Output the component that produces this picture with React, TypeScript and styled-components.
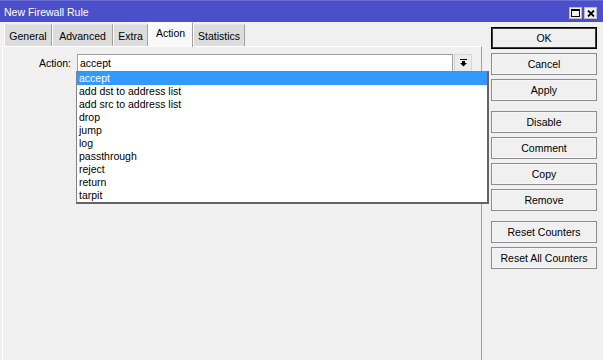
import styled, { createGlobalStyle } from "styled-components";

const GlobalStyle = createGlobalStyle`
  html, body {
    margin: 0;
    padding: 0;
    background: #f0f0f0;
  }
  body {
    font-family: "Liberation Sans", Arial, sans-serif;
    font-size: 10.5px;
    color: #000;
  }
`;

const Window = styled.div`
  width: 603px;
  height: 360px;
  display: flex;
  flex-direction: column;
  background: #f0f0f0;
  overflow: hidden;
`;

const TitleBar = styled.div`
  height: 22px;
  flex: none;
  display: flex;
  align-items: center;
  justify-content: space-between;
  padding: 0 6px 0 4px;
  box-sizing: border-box;
  background: #4b4fc9;
  border-top: 1px solid #6a6ed6;
  color: #fff;
  font-size: 10.5px;
`;

const TitleButtons = styled.div`
  display: flex;
  gap: 2px;
  margin-top: 3px;
`;

const TitleButton = styled.div`
  width: 13px;
  height: 12px;
  display: flex;
  align-items: center;
  justify-content: center;
  background: #f0f0f0;
  box-sizing: border-box;
  border: 1px solid #bdbdbd;
`;

const Body = styled.div`
  flex: 1;
  display: flex;
  min-height: 0;
`;

const Main = styled.div`
  width: 482px;
  flex: none;
  display: flex;
  flex-direction: column;
  padding-left: 2px;
  box-sizing: border-box;
  position: relative;
  z-index: 2;
`;

const TabStrip = styled.div`
  height: 24px;
  flex: none;
  display: flex;
  align-items: flex-end;
  padding-left: 2px;
`;

const Tab = styled.div<{ $active?: boolean; $w: number }>`
  width: ${(p) => p.$w}px;
  height: ${(p) => (p.$active ? 25 : 22)}px;
  margin-bottom: ${(p) => (p.$active ? -1 : 0)}px;
  box-sizing: border-box;
  display: flex;
  align-items: ${(p) => (p.$active ? "flex-start" : "center")};
  justify-content: center;
  padding-top: ${(p) => (p.$active ? 4 : 1)}px;
  background: ${(p) => (p.$active ? "#f9f9f9" : "#dcdcdc")};
  border-top: 1px solid ${(p) => (p.$active ? "#ffffff" : "#e6e6e6")};
  border-left: 1px solid #ffffff;
  border-right: 1px solid #a0a0a0;
  position: relative;
  z-index: ${(p) => (p.$active ? 1 : 0)};
`;

const Panel = styled.div`
  flex: 1;
  border-top: 1px solid #ffffff;
  border-left: 1px solid #ffffff;
  border-right: 1px solid #a0a0a0;
  padding-top: 7px;
  box-sizing: border-box;
`;

const FieldRow = styled.div`
  display: flex;
  align-items: center;
`;

const Label = styled.div`
  width: 68px;
  text-align: right;
  margin-right: 6px;
`;

const InputWrap = styled.div`
  position: relative;
  display: flex;
  gap: 1px;
`;

const Input = styled.div`
  width: 376px;
  height: 18px;
  box-sizing: border-box;
  background: #fff;
  border: 1px solid #a0a0a0;
  padding: 0 2px;
  line-height: 16px;
`;

const DropButton = styled.div`
  width: 18px;
  height: 18px;
  box-sizing: border-box;
  display: flex;
  align-items: center;
  justify-content: center;
  background: #ececec;
  border: 1px solid #d6d6d6;
`;

const DropList = styled.div`
  position: absolute;
  top: 17px;
  left: -1px;
  width: 413px;
  box-sizing: border-box;
  background: #fff;
  border-left: 1px solid #828282;
  border-top: 1px solid #828282;
  border-right: 2px solid #646464;
  border-bottom: 2px solid #646464;
  z-index: 5;
`;

const Item = styled.div<{ $selected?: boolean }>`
  height: 13px;
  line-height: 13px;
  padding-left: 2px;
  background: ${(p) => (p.$selected ? "#3399ff" : "transparent")};
  color: ${(p) => (p.$selected ? "#fff" : "#000")};
  white-space: nowrap;
`;

const Side = styled.div`
  flex: 1;
  display: flex;
  flex-direction: column;
  padding: 5px 6px 0 9px;
  gap: 4px;
`;

const Button = styled.div<{ $default?: boolean; $gap?: boolean }>`
  width: 106px;
  height: 22px;
  box-sizing: border-box;
  display: flex;
  align-items: center;
  justify-content: center;
  background: #f0f0f0;
  border: 1px solid ${(p) => (p.$default ? "#000" : "#8c8c8c")};
  box-shadow: inset 0 0 0 1px ${(p) => (p.$default ? "#3c3c3c" : "#f7f7f7")};
  margin-top: ${(p) => (p.$gap ? 6 : 0)}px;
`;

const tabs = [
  { name: "General", w: 48 },
  { name: "Advanced", w: 61 },
  { name: "Extra", w: 35 },
  { name: "Action", w: 45 },
  { name: "Statistics", w: 52 },
];

const actions = [
  "accept",
  "add dst to address list",
  "add src to address list",
  "drop",
  "jump",
  "log",
  "passthrough",
  "reject",
  "return",
  "tarpit",
];

const buttons = [
  { label: "OK", def: true },
  { label: "Cancel" },
  { label: "Apply" },
  { label: "Disable", gap: true },
  { label: "Comment" },
  { label: "Copy" },
  { label: "Remove" },
  { label: "Reset Counters", gap: true },
  { label: "Reset All Counters" },
];

function App() {
  return (
    <>
      <GlobalStyle />
      <Window>
        <TitleBar>
          <span>New Firewall Rule</span>
          <TitleButtons>
            <TitleButton>
              <svg width="9" height="8" viewBox="0 0 9 8">
                <rect x="0.5" y="0.5" width="8" height="7" fill="none" stroke="#000" />
                <rect x="0" y="0" width="9" height="2" fill="#000" />
              </svg>
            </TitleButton>
            <TitleButton>
              <svg width="8" height="7" viewBox="0 0 8 7">
                <path d="M1 0.5 L7 6.5 M7 0.5 L1 6.5" stroke="#000" strokeWidth="1.8" />
              </svg>
            </TitleButton>
          </TitleButtons>
        </TitleBar>
        <Body>
          <Main>
            <TabStrip>
              {tabs.map((t) => (
                <Tab key={t.name} $w={t.w} $active={t.name === "Action"}>
                  {t.name}
                </Tab>
              ))}
            </TabStrip>
            <Panel>
              <FieldRow>
                <Label>Action:</Label>
                <InputWrap>
                  <Input>accept</Input>
                  <DropButton>
                    <svg width="7" height="8" viewBox="0 0 7 8">
                      <rect x="0" y="0" width="7" height="1" fill="#000" />
                      <rect x="2" y="2" width="3" height="2" fill="#000" />
                      <polygon points="0,4 7,4 3.5,7.5" fill="#000" />
                    </svg>
                  </DropButton>
                  <DropList>
                    {actions.map((a, i) => (
                      <Item key={a} $selected={i === 0}>
                        {a}
                      </Item>
                    ))}
                  </DropList>
                </InputWrap>
              </FieldRow>
            </Panel>
          </Main>
          <Side>
            {buttons.map((b) => (
              <Button key={b.label} $default={b.def} $gap={b.gap}>
                {b.label}
              </Button>
            ))}
          </Side>
        </Body>
      </Window>
    </>
  );
}

export default App;
